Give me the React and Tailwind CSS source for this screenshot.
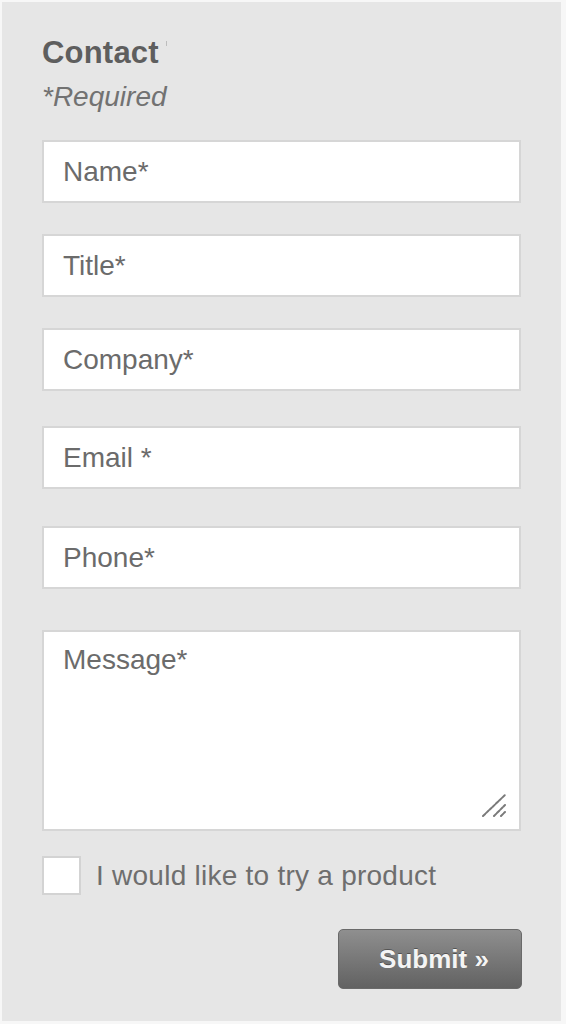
import React from "react";

const font = { fontFamily: '"Liberation Sans", Arial, Helvetica, sans-serif' };

function Field({ label, className }) {
  return (
    <div
      className={`h-[63px] w-[479px] border-2 border-[#d6d6d6] bg-white pl-[19px] flex items-center text-[28px] leading-[32px] text-[#6b6b6b] ${className}`}
    >
      {label}
    </div>
  );
}

export default function App() {
  return (
    <div className="min-h-[1024px] w-[566px] bg-[#f7f7f7] pl-[2px] pt-[2px]" style={font}>
      <div className="w-[559px] h-[1019px] bg-[#e6e6e6] pl-[40px] pr-[39px] pt-[33px] flex flex-col">
        <div className="flex items-start">
          <h1 className="text-[31px] leading-[36px] font-bold text-[#5e5e5e] tracking-[0.2px]">Contact</h1>
          <span className="ml-[7px] mt-[6px] h-[5px] w-px bg-[#bdbdbd]" />
        </div>
        <p className="mt-[10px] text-[28px] leading-[32px] italic text-[#727272]">*Required</p>

        <Field label="Name*" className="mt-[27px]" />
        <Field label="Title*" className="mt-[31px]" />
        <Field label="Company*" className="mt-[31px]" />
        <Field label="Email *" className="mt-[35px]" />
        <Field label="Phone*" className="mt-[37px]" />

        <div className="relative mt-[41px] h-[201px] w-[479px] border-2 border-[#d6d6d6] bg-white pl-[19px] pt-[12px] text-[28px] leading-[32px] text-[#6b6b6b]">
          Message*
          <svg
            className="absolute right-[12px] bottom-[12px]"
            width="25"
            height="23"
            viewBox="0 0 25 23"
            fill="none"
            stroke="#7a7a7a"
            strokeWidth="2"
            strokeLinecap="round"
            strokeDasharray="3 1.5"
          >
            <line x1="1" y1="22" x2="23" y2="1" />
            <line x1="12" y1="22" x2="23" y2="11" />
            <line x1="19" y1="22" x2="23" y2="18" />
          </svg>
        </div>

        <label className="mt-[25px] flex items-center">
          <span className="h-[39px] w-[39px] border-2 border-[#d3d3d3] bg-white" />
          <span className="ml-[15px] text-[28px] leading-[32px] tracking-[0.25px] text-[#6e6e6e]">I would like to try a product</span>
        </label>

        <div className="mt-[34px] flex justify-end">
          <button className="h-[60px] w-[184px] rounded-[5px] border border-[#6a6a6a] bg-gradient-to-b from-[#8f8f8f] to-[#626262] pl-[8px] text-[26px] font-bold text-[#f4f4f4] [text-shadow:0_-1px_0_rgba(0,0,0,0.35)]">
            Submit »
          </button>
        </div>
      </div>
    </div>
  );
}
